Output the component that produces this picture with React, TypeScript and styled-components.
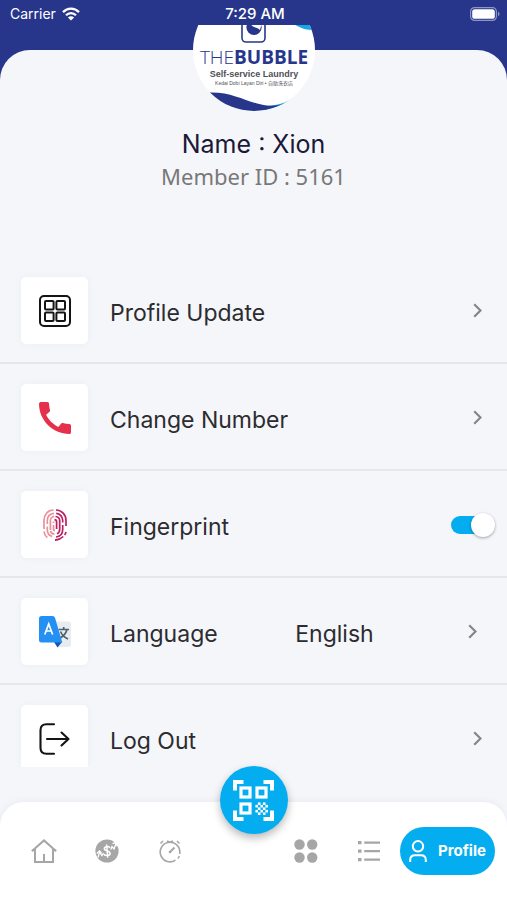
import React, { useState } from "react";
import styled, { createGlobalStyle } from "styled-components";

const color = {
  navy: "#27368b",
  cyan: "#04adf0",
  sheet: "#f5f6fa",
  line: "#e6e7eb",
  ink: "#2c2c30",
  muted: "#787878",
  icon: "#a6a6a6",
};

const GlobalStyle = createGlobalStyle`
  *, *::before, *::after { box-sizing: border-box; }
  body {
    margin: 0;
    background: ${color.sheet};
    font-family: Inter, "Liberation Sans", sans-serif;
    -webkit-font-smoothing: antialiased;
  }
  button { font: inherit; border: 0; background: none; padding: 0; cursor: pointer; }
  svg { display: block; }
`;

const Screen = styled.div`
  height: 100vh;
  display: flex;
  flex-direction: column;
  background: ${color.navy};
  overflow: hidden;
`;

const StatusBar = styled.header`
  flex: none;
  height: 25px;
  padding: 2px 7px 0 10px;
  display: grid;
  grid-template-columns: 1fr auto 1fr;
  align-items: center;
  color: #fff;
  font-size: 14px;
  line-height: 20px;
`;

const Carrier = styled.span`
  display: flex;
  align-items: center;
  gap: 6px;
`;

const Clock = styled.time`
  font-size: 15px;
  font-weight: 500;
`;

const Battery = styled.span`
  justify-self: end;
`;

const Scroll = styled.main`
  flex: 1;
  min-height: 0;
  overflow: hidden;
  padding-top: 25px;
`;

const Sheet = styled.div`
  min-height: 100%;
  background: ${color.sheet};
  border-radius: 30px 30px 0 0;
`;

const ProfileHead = styled.section`
  height: 207px;
  display: flex;
  flex-direction: column;
  align-items: center;
`;

const Avatar = styled.div`
  flex: none;
  width: 122px;
  height: 122px;
  margin-top: -61px;
  border-radius: 50%;
  overflow: hidden;
  background: #fff;
`;

const Name = styled.h1`
  margin: 18px 0 0;
  font-size: 25px;
  line-height: 31px;
  font-weight: 400;
  color: #1b1838;
`;

const MemberId = styled.p`
  margin: 0;
  font-family: "Noto Sans", "Open Sans", sans-serif;
  font-size: 22px;
  line-height: 32px;
  color: ${color.muted};
`;

const List = styled.ul`
  list-style: none;
  margin: 0;
  padding: 0;
`;

const Item = styled.li`
  border-bottom: 2px solid ${color.line};
  &:last-child { border-bottom: 0; }
`;

const Row = styled.button<{ $end: number }>`
  width: 100%;
  display: grid;
  grid-template-columns: 67px 13fr 12fr auto;
  align-items: center;
  column-gap: 22px;
  padding: 20px ${(p) => p.$end}px 18px 21px;
  text-align: left;
  color: ${color.ink};
  font-size: 23px;
  line-height: 28px;
  cursor: pointer;
`;

const Tile = styled.span`
  width: 67px;
  height: 67px;
  display: grid;
  place-items: center;
  background: #fff;
  border-radius: 5px;
  box-shadow: 0 0 8px rgba(60, 60, 90, 0.04);
`;

const Label = styled.span<{ $wide: boolean }>`
  grid-column: ${(p) => (p.$wide ? "span 2" : "auto")};
  padding-top: 4px;
  white-space: nowrap;
`;

const Value = styled.span`
  padding-top: 4px;
`;

const Switch = styled.input`
  appearance: none;
  margin: 0;
  width: 40px;
  height: 18px;
  border-radius: 9px;
  background: ${(p) => (p.checked ? color.cyan : "#c4c6cc")};
  display: flex;
  align-items: center;
  justify-content: ${(p) => (p.checked ? "flex-end" : "flex-start")};
  cursor: pointer;

  &::before {
    content: "";
    flex: none;
    width: 24px;
    height: 24px;
    margin: 0 -4px;
    border-radius: 50%;
    background: #fff;
    box-shadow: 0 1px 3px rgba(0, 0, 0, 0.35);
  }
`;

const Footer = styled.footer`
  flex: none;
  position: relative;
  padding-top: 35px;
  background: ${color.sheet};
`;

const ScanButton = styled.button`
  position: absolute;
  top: -1px;
  left: 50%;
  width: 68px;
  height: 68px;
  margin-left: -34px;
  border-radius: 50%;
  background: ${color.cyan};
  display: grid;
  place-items: center;
  box-shadow: 0 4px 8px rgba(0, 0, 0, 0.28);
`;

const TabBar = styled.nav`
  height: 98px;
  padding: 0 12px;
  display: flex;
  align-items: center;
  justify-content: space-between;
  background: #fff;
  border-radius: 24px 24px 0 0;
  box-shadow: 0 0 8px rgba(40, 40, 70, 0.06);
`;

const TabGroup = styled.div`
  display: flex;
  align-items: center;
`;

const Tab = styled.button`
  width: 63px;
  height: 48px;
  display: grid;
  place-items: center;
  color: ${color.icon};
`;

const ActiveTab = styled.button`
  width: 95px;
  height: 48px;
  border-radius: 24px;
  background: ${color.cyan};
  color: #fff;
  display: flex;
  align-items: center;
  justify-content: center;
  gap: 11px;
  font-size: 15px;
  line-height: 20px;
  font-weight: 700;
`;

const Logo = () => (
  <svg width="122" height="122" viewBox="0 0 122 122" role="img" aria-label="The Bubble Self-service Laundry">
    <path d="M98 33C106 39 112 41 122 41V20H98Z" fill="#15a9e2" />
    <rect x="49" y="20" width="23" height="33" rx="4" fill="#fff" stroke={color.navy} strokeWidth="1.6" />
    <circle cx="61" cy="38.5" r="7.6" fill={color.navy} />
    <path d="M57 33C59 40 63 37 67 41L69 33Z" fill="#fff" />
    <text x="61" y="75" textAnchor="middle" fontFamily="Open Sans, sans-serif" fontSize="19" fill={color.navy}>
      <tspan fontWeight="300">THE</tspan>
      <tspan fontWeight="700">BUBBLE</tspan>
    </text>
    <text x="61" y="88" textAnchor="middle" fontFamily="Liberation Sans, sans-serif" fontSize="9" fontWeight="700" fill="#505058">
      Self-service Laundry
    </text>
    <text x="61" y="96" textAnchor="middle" fontFamily="Liberation Sans, Noto Sans CJK TC, sans-serif" fontSize="5" fontWeight="400" fill="#505058">
      Kedai Dobi Layan Diri • 自助洗衣店
    </text>
    <path d="M74 117C88 116 96 112 106 106L112 122H70Z" fill="#15a9e2" />
    <path d="M14 103.600C40 102 54 114 74 116.600C81 117.500 88 116 94 113.500L90 124H10Z" fill={color.navy} />
  </svg>
);

const WifiIcon = () => (
  <svg width="18" height="14" viewBox="0 0 18 14" fill="none" stroke="#fff" strokeWidth="2.300">
    <path d="M1 5.100C5.500 .4 12.500 .4 17 5.100" />
    <path d="M4 8.300C6.900 5.400 11.100 5.400 14 8.300" />
    <path d="M9 13.500L5.900 10.400C7.700 8.900 10.300 8.900 12.100 10.400Z" fill="#fff" stroke="none" />
  </svg>
);

const BatteryIcon = () => (
  <svg width="30" height="14" viewBox="0 0 30 14">
    <rect x=".6" y=".6" width="25.800" height="12.800" rx="4" fill="none" stroke="#8f96c4" strokeWidth="1.200" />
    <rect x="2.200" y="2.200" width="22.600" height="9.600" rx="2.600" fill="#fff" />
    <path d="M28 4.800C30 5.500 30 8.500 28 9.200Z" fill="#8f96c4" />
  </svg>
);

const WidgetIcon = () => (
  <svg width="32" height="32" viewBox="0 0 32 32" fill="none" stroke="#141414" strokeWidth="2">
    <rect x="1" y="1" width="30" height="30" rx="4" />
    <rect x="6" y="6" width="8.600" height="8.600" rx="1" />
    <rect x="17.400" y="6" width="8.600" height="8.600" rx="1" />
    <rect x="6" y="17.400" width="8.600" height="8.600" rx="1" />
    <rect x="17.400" y="17.400" width="8.600" height="8.600" rx="1" />
  </svg>
);

const PhoneIcon = () => (
  <svg width="32" height="32" viewBox="3 3 18 18" fill="#e5304c">
    <path d="M20.010 15.380c-1.230 0-2.420-.2-3.530-.56a.977.977 0 0 0-1.010.24l-1.570 1.970c-2.830-1.350-5.480-3.900-6.890-6.830l1.950-1.660c.27-.28.35-.67.24-1.020-.37-1.110-.56-2.300-.56-3.530 0-.54-.45-.99-.99-.99H4.190C3.650 3 3 3.240 3 3.990 3 13.280 10.730 21 20.010 21c.71 0 .99-.63.99-1.180v-3.450c0-.54-.45-.99-.99-.99z" />
  </svg>
);

const FingerprintIcon = () => (
  <svg width="24" height="32" viewBox="0 0 24 32" fill="none" strokeWidth="1.700">
    <g stroke="#e8909a">
      <path d="M1 20V11.500C1 5.500 5 1 10.500 1" />
      <path d="M1 22.500C1.300 25 2.500 27.200 4.300 28.700" />
      <path d="M4.300 15V11.500C4.300 7.500 7 4.400 11 4.300" />
      <path d="M4.300 17.500V20.500C4.300 24 6.200 26.600 9.200 27.500" />
      <path d="M7.400 21V11.800C7.400 9.500 9 7.500 11.200 7.400" />
      <path d="M7.400 22C8 24.200 9.700 25 11.500 25" />
      <path d="M10.500 16V20.300C10.500 21.300 11 21.700 12 21.700" />
      <path d="M10.500 14V12.500" />
    </g>
    <g stroke="#bd1f62">
      <path d="M13 1C18.800 1.200 23 5.500 23 11.500V17" />
      <path d="M23 23C22.600 24.500 22.200 25 21.600 26" />
      <path d="M13.200 4.400C17 4.700 19.700 7.800 19.700 11.500V13.500" />
      <path d="M19.700 16V20.500C19.700 24.500 17.200 27.500 13 28" />
      <path d="M11.500 10.600C13.500 10.600 13.600 11.500 13.600 13V20" />
      <path d="M12.500 7.500C15.200 7.600 16.700 9.500 16.700 12V20.500C16.700 22.500 15.700 24 14 24.700" />
      <path d="M12 31.200C15.500 31 18 29.700 20.300 27.500" />
    </g>
  </svg>
);

const TranslateIcon = () => (
  <svg width="32" height="32" viewBox="0 0 32 32">
    <path d="M13 5.500H29.500Q32 5.500 32 8V28.500Q32 31 29.500 31H19Z" fill="#e9ecee" />
    <path d="M19.500 13.500H30M24.700 11V13.500M28 13.500C27 17.500 23.500 21 19.500 23M21.500 15.500C23 19 25.500 21.500 29 23" fill="none" stroke="#4e6070" strokeWidth="1.700" />
    <path d="M15 26H23L18.500 31.500Z" fill="#1257b0" />
    <path d="M2.500 0H13.500Q15.400 0 16 1.800L23.300 26.500H2.500Q0 26.500 0 24V2.500Q0 0 2.500 0Z" fill="#2590f4" />
    <path d="M5.800 18.500L9.700 8L13.600 18.500M7.200 15H12.200" fill="none" stroke="#fff" strokeWidth="1.700" />
  </svg>
);

const LogoutIcon = () => (
  <svg width="32" height="32" viewBox="0 0 32 32" fill="none" stroke="#141414" strokeWidth="2.100" strokeLinecap="round" strokeLinejoin="round">
    <path d="M15 1.200H7.500Q1.500 1.200 1.500 7.200V24.800Q1.500 30.800 7.500 30.800H15" />
    <path d="M8 16H29.500M22.500 9.500L29.500 16L22.500 22.500" />
  </svg>
);

const Chevron = () => (
  <svg width="9" height="15" viewBox="0 0 9 15" fill="none" stroke="#868689" strokeWidth="2.200">
    <path d="M1.200 1.200L7.500 7.500L1.200 13.800" />
  </svg>
);

const checker = Array.from({ length: 25 }, (_, i) => [i % 5, Math.floor(i / 5)]).filter(([x, y]) => (x + y) % 2);

const QrIcon = () => (
  <svg width="41" height="41" viewBox="0 0 41 41" fill="#fff">
    <path d="M0 0H10.500V4H4V10.500H0ZM30.500 0H41V10.500H37V4H30.500ZM0 30.500H4V37H10.500V41H0ZM37 30.500H41V41H30.500V37H37Z" />
    <g fill="none" stroke="#fff" strokeWidth="3.200">
      <rect x="8" y="8" width="9" height="9" />
      <rect x="24" y="8" width="9" height="9" />
      <rect x="8" y="24" width="9" height="9" />
    </g>
    {checker.map(([x, y]) => (
      <rect key={`${x}-${y}`} x={22.4 + x * 2.5} y={22.4 + y * 2.5} width="2.600" height="2.600" />
    ))}
  </svg>
);

const HomeIcon = () => (
  <svg width="26" height="24" viewBox="0 0 26 24" fill="none" stroke="currentColor" strokeWidth="2">
    <path d="M.8 12.200L13 1.400L25.200 12.200" />
    <path d="M4 10V23H22V10M13 23V15" />
    <path d="M1 11.200H4.500M21.500 11.200H25" strokeWidth="1.400" />
  </svg>
);

const RateIcon = () => (
  <svg width="24" height="24" viewBox="0 0 24 24">
    <circle cx="12" cy="12" r="11.600" fill="currentColor" />
    <g fill="none" stroke="#fff">
      <path d="M3 18.500L4.500 13L7 16.500L8.500 14" strokeWidth="1.300" />
      <path d="M1.800 14.500L4.500 11.800L6.500 14" strokeWidth="1.200" />
      <path d="M15.800 10.500L17 7.500L19 10L21 4.500M17.500 4.500L21.500 3.500L22 7.500" strokeWidth="1.300" />
      <path d="M15 8.700C13.500 7 9.200 7.300 9.300 9.900C9.400 12.500 15 11.400 15.100 14.200C15.200 17 10.500 17.200 8.800 15.200M11.600 5.500L12.700 18.800" strokeWidth="1.500" />
    </g>
  </svg>
);

const TimerIcon = () => (
  <svg width="22" height="24" viewBox="0 0 22 24" fill="none" stroke="currentColor" strokeWidth="1.600">
    <path d="M16.500 21.200A9.800 9.800 0 1 1 20.800 13V15M20.300 17L19 19.500" />
    <path d="M11 13L15.500 8.500" strokeWidth="2" />
    <circle cx="11" cy="13" r="1.300" fill="currentColor" stroke="none" />
    <path d="M1.500 4.500L4 2M20.500 4.500L18 2M8 2L11 3.300L14 2" />
  </svg>
);

const DotsIcon = () => (
  <svg width="24" height="24" viewBox="0 0 24 24" fill="currentColor">
    <circle cx="5.500" cy="5.500" r="5.200" />
    <circle cx="18.200" cy="5.500" r="5.200" />
    <circle cx="5.500" cy="18.500" r="5.200" />
    <circle cx="18.200" cy="18.500" r="5.200" />
  </svg>
);

const ListIcon = () => (
  <svg width="22" height="22" viewBox="0 0 22 22" fill="currentColor">
    <path d="M0 1H3.500V4.300H0ZM0 9.400H3.500V12.700H0ZM0 18H3.500V21.300H0ZM6.200 1.500H22V3.800H6.200ZM6.200 9.900H22V12.200H6.200ZM6.200 18.500H22V20.800H6.200Z" />
  </svg>
);

const PersonIcon = () => (
  <svg width="18" height="22" viewBox="0 0 18 22" fill="none" stroke="#fff" strokeWidth="2">
    <circle cx="9" cy="6.300" r="5.200" />
    <path d="M1.200 22V20Q1.200 15.300 6 15.300H12Q16.800 15.300 16.800 20V22" />
  </svg>
);

type LinkRow = { label: string; icon: React.ReactNode; value?: string };

const MenuRow = ({ label, icon, value }: LinkRow) => (
  <Item>
    <Row type="button" $end={value ? 30 : 25}>
      <Tile>{icon}</Tile>
      <Label $wide={!value}>{label}</Label>
      {value && <Value>{value}</Value>}
      <Chevron />
    </Row>
  </Item>
);

export default function App() {
  const [fingerprint, setFingerprint] = useState(true);

  return (
    <>
      <GlobalStyle />
      <Screen>
        <StatusBar>
          <Carrier>
            Carrier
            <WifiIcon />
          </Carrier>
          <Clock>7:29 AM</Clock>
          <Battery>
            <BatteryIcon />
          </Battery>
        </StatusBar>
        <Scroll>
          <Sheet>
            <ProfileHead>
              <Avatar>
                <Logo />
              </Avatar>
              <Name>Name : Xion</Name>
              <MemberId>Member ID : 5161</MemberId>
            </ProfileHead>
            <List>
              <MenuRow label="Profile Update" icon={<WidgetIcon />} />
              <MenuRow label="Change Number" icon={<PhoneIcon />} />
              <Item>
                <Row as="label" htmlFor="fingerprint" $end={16}>
                  <Tile>
                    <FingerprintIcon />
                  </Tile>
                  <Label $wide>Fingerprint</Label>
                  <Switch
                    id="fingerprint"
                    type="checkbox"
                    role="switch"
                    checked={fingerprint}
                    onChange={(e) => setFingerprint(e.target.checked)}
                  />
                </Row>
              </Item>
              <MenuRow label="Language" icon={<TranslateIcon />} value="English" />
              <MenuRow label="Log Out" icon={<LogoutIcon />} />
            </List>
          </Sheet>
        </Scroll>
        <Footer>
          <TabBar aria-label="Main">
            <TabGroup>
              <Tab type="button" aria-label="Home"><HomeIcon /></Tab>
              <Tab type="button" aria-label="Rates"><RateIcon /></Tab>
              <Tab type="button" aria-label="Timer"><TimerIcon /></Tab>
            </TabGroup>
            <TabGroup>
              <Tab type="button" aria-label="Services"><DotsIcon /></Tab>
              <Tab type="button" aria-label="History"><ListIcon /></Tab>
              <ActiveTab type="button" aria-current="page">
                <PersonIcon />
                Profile
              </ActiveTab>
            </TabGroup>
          </TabBar>
          <ScanButton type="button" aria-label="Scan QR code">
            <QrIcon />
          </ScanButton>
        </Footer>
      </Screen>
    </>
  );
}
